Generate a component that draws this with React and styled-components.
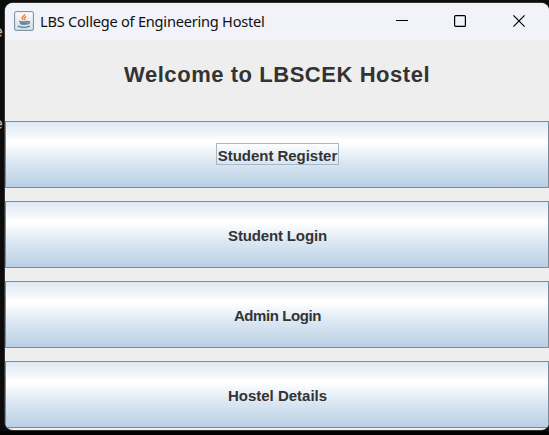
import React from "react";
import styled, { createGlobalStyle } from "styled-components";

const GlobalStyle = createGlobalStyle`
  * { box-sizing: border-box; }
  html, body { margin: 0; width: 549px; height: 435px; overflow: hidden; background: #0c0c0c; }
`;

const Desktop = styled.div`
  position: relative;
  width: 549px;
  height: 435px;
  padding: 3px 0 5px 5px;
  overflow: hidden;
  background: linear-gradient(#0c0c0c 0 431px, #020202 431px);
`;

const Console = styled.div`
  position: absolute;
  left: -7px;
  top: ${(p) => p.$top}px;
  font: 17px/20px "Liberation Mono", monospace;
  color: #b8b8b8;
`;

const Window = styled.main`
  position: relative;
  display: flex;
  flex-direction: column;
  width: 544px;
  height: 427px;
  overflow: hidden;
  border-radius: 8px;
  background: #eeeeee;
  box-shadow: 0 0 0 1px #343434;
`;

const TitleBar = styled.header`
  display: flex;
  align-items: center;
  flex: 0 0 37px;
  padding: 0 1px 1px 9px;
  background: #f1f3f9;
`;

const Title = styled.span`
  flex: 1;
  margin-left: 6px;
  font: 14.6px/20px "Noto Sans", "Open Sans", sans-serif;
  letter-spacing: -0.23px;
  white-space: nowrap;
  color: #111;
`;

const Controls = styled.div`
  display: flex;
`;

const Control = styled.button`
  display: flex;
  align-items: center;
  justify-content: center;
  width: 58.5px;
  height: 36px;
  padding: 0;
  border: 0;
  background: transparent;
`;

const Heading = styled.h1`
  flex: 0 0 81px;
  margin: 0;
  padding: 21px 0 0 119px;
  font: bold 22px/27px "Liberation Sans", Arial, sans-serif;
  letter-spacing: 0.55px;
  white-space: nowrap;
  color: #333;
`;

const Menu = styled.nav`
  display: flex;
  flex-direction: column;
  gap: 13px;
`;

const MenuButton = styled.button`
  display: flex;
  align-items: center;
  justify-content: center;
  height: 67px;
  padding: 0 0 1px 1px;
  border: 1px solid #7a8a99;
  border-radius: 0;
  background: linear-gradient(#dde8f3 0%, #ffffff 30%, #ffffff 32%, #dde8f3 60%, #b8cfe5 100%);
  color: #333;
`;

const Label = styled.span`
  height: 22px;
  padding: 0 1px;
  border: 1px solid ${(p) => (p.$focused ? "#a3b8cc" : "transparent")};
  font: bold 15px/24px "Liberation Sans", Arial, sans-serif;
  letter-spacing: ${(p) => p.$tracking}px;
  white-space: nowrap;
`;

function JavaIcon() {
  return (
    <svg width="20" height="20" viewBox="0 0 20 20" fill="none">
      <defs>
        <linearGradient id="tile" x2="0" y2="1">
          <stop stopColor="#fbfcfc" />
          <stop offset="1" stopColor="#d5dde2" />
        </linearGradient>
      </defs>
      <rect x=".6" y=".6" width="18.8" height="18.8" rx="1.5" fill="url(#tile)" stroke="#6f8ba1" />
      <path d="M10.6 3c1 1.8-3.2 2.8-2.5 4.4.3.7.8 1 1 1.6M12.3 5.6c-2 .8-2.6 1.5-1.6 2.4.4.4.3.8-.1 1.2" stroke="#f08a35" strokeWidth="1.5" />
      <path d="M5.5 10.5h8.3c-.2 2.4-1.3 3.5-2.6 3.5H8c-1.4 0-2.3-1.2-2.5-3.5Z" fill="#8fabc0" />
      <path d="M5.2 10.4c2 .6 6.6.6 8.8 0M6.4 12.4c1.8.6 4.8.6 6.5 0M13.8 10.6c2.8-.4 2.2 2-.8 2.5M3.8 15c2.4 1.7 9.8 1.7 12 0" stroke="#547d9d" strokeWidth="1.2" />
    </svg>
  );
}

const items = [
  { text: "Student Register", tracking: -0.04 },
  { text: "Student Login", tracking: -0.15 },
  { text: "Admin Login", tracking: -0.4 },
  { text: "Hostel Details", tracking: 0 },
];

export default function App() {
  return (
    <>
      <GlobalStyle />
      <Desktop>
        <Console $top={23}>e</Console>
        <Console $top={115}>e</Console>
        <Window>
          <TitleBar>
            <JavaIcon />
            <Title>LBS College of Engineering Hostel</Title>
            <Controls>
              <Control aria-label="Minimize">
                <svg width="12" height="12"><path d="M0 5.5h12" stroke="#000" /></svg>
              </Control>
              <Control aria-label="Maximize">
                <svg width="12" height="12" fill="none"><rect x=".6" y=".6" width="10.8" height="10.8" rx="1" stroke="#000" strokeWidth="1.2" /></svg>
              </Control>
              <Control aria-label="Close">
                <svg width="12" height="12"><path d="m.4.4 11.2 11.2M11.6.4.4 11.6" stroke="#000" strokeWidth="1.2" /></svg>
              </Control>
            </Controls>
          </TitleBar>
          <Heading>Welcome to LBSCEK Hostel</Heading>
          <Menu>
            {items.map(({ text, tracking }, i) => (
              <MenuButton key={text}>
                <Label $focused={i === 0} $tracking={tracking}>{text}</Label>
              </MenuButton>
            ))}
          </Menu>
        </Window>
      </Desktop>
    </>
  );
}
